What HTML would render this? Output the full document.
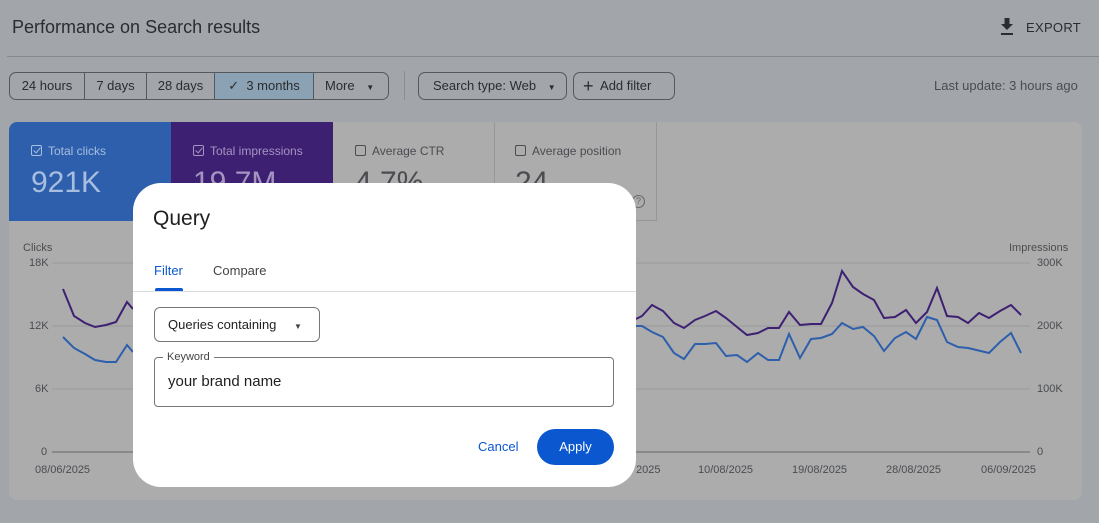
<!DOCTYPE html>
<html><head><meta charset="utf-8"><style>
*{box-sizing:border-box;margin:0;padding:0}
body{width:1099px;height:523px;overflow:hidden;background:#a2a5aa;font-family:"Liberation Sans",sans-serif;color:#2a2c30;position:relative}
.a{position:absolute}
.btn{position:absolute;top:72px;height:28px;border:1px solid #55585c;border-radius:7px;font-size:13px;line-height:26px;color:#2a2c30}
.seg{position:absolute;top:0;height:26px;text-align:center;border-left:1px solid #55585c}
.card{position:absolute;top:122px;height:99px;width:162px;font-size:12px}
.cb{display:inline-block;width:11px;height:11px;border:1px solid currentColor;border-radius:2px;vertical-align:-1px;margin-right:6px;position:relative}
.cb.on::after{content:"";position:absolute;left:3px;top:0px;width:3px;height:6px;border-right:1.5px solid currentColor;border-bottom:1.5px solid currentColor;transform:rotate(40deg)}
.big{position:absolute;left:22px;top:44px;font-size:30px}
.ax{position:absolute;font-size:11px;color:#4a4c50}
</style></head><body>
<div class="a" style="left:12px;top:17px;font-size:18px;color:#2a2c30">Performance on Search results</div>
<div class="a" style="left:1000px;top:18px;width:14px;height:17px">
<svg width="14" height="17" viewBox="0 0 14 17"><path d="M4.5 0h5v6h3.5L7 12 1 6h3.5z M1 15h12v2H1z" fill="#2a2c30"/></svg></div>
<div class="a" style="left:1026px;top:20px;font-size:13px;letter-spacing:.3px;color:#2a2c30">EXPORT</div>
<div class="a" style="left:7px;top:56px;width:1092px;height:1px;background:#868a8f"></div>

<div class="btn" style="left:9px;width:380px">
 <div class="seg" style="left:0;width:74px;border:none">24 hours</div>
 <div class="seg" style="left:74px;width:62px">7 days</div>
 <div class="seg" style="left:136px;width:68px">28 days</div>
 <div class="seg" style="left:204px;width:99px;background:#8aa2b3">✓&nbsp;&nbsp;3 months</div>
 <div class="seg" style="left:303px;width:76px;text-align:left;padding-left:11px">More <span style="font-size:8px;margin-left:8px">▼</span></div>
</div>
<div class="a" style="left:404px;top:71px;width:1px;height:29px;background:#8a8d92"></div>
<div class="btn" style="left:418px;width:149px;padding-left:14px">Search type: Web <span style="font-size:8px;margin-left:8px">▼</span></div>
<div class="btn" style="left:573px;width:102px;padding-left:9px"><span style="font-size:18px;vertical-align:-2px">+</span>&nbsp; Add filter</div>
<div class="a" style="left:934px;top:78px;font-size:13px;color:#4a4c50">Last update: 3 hours ago</div>

<div class="a" style="left:9px;top:122px;width:1073px;height:378px;background:#acacac;border-radius:8px"></div>
<div class="card" style="left:9px;background:#2d5fac;color:#a8bedf;border-radius:8px 0 0 0"><div class="a" style="left:22px;top:22px"><span class="cb on"></span>Total clicks</div><div class="big">921K</div></div>
<div class="card" style="left:171px;background:#3e2073;color:#a494c2"><div class="a" style="left:22px;top:22px"><span class="cb on"></span>Total impressions</div><div class="big">19.7M</div></div>
<div class="card" style="left:333px;color:#4a4c50;border-right:1px solid #979797"><div class="a" style="left:22px;top:22px"><span class="cb"></span>Average CTR</div><div class="big">4.7%</div></div>
<div class="card" style="left:495px;color:#4a4c50;border-right:1px solid #979797;border-bottom:1px solid #979797"><div class="a" style="left:20px;top:22px"><span class="cb"></span>Average position</div><div class="big" style="left:20px">24</div></div>
<div class="a" style="left:632px;top:195px;width:13px;height:13px;border:1px solid #666;border-radius:50%;font-size:9px;line-height:11px;text-align:center;color:#666">?</div>

<svg class="a" style="left:0;top:0" width="1099" height="523">
<g stroke="#9a9a9a" stroke-width="1"><line x1="52" y1="263" x2="1030" y2="263"/><line x1="52" y1="326" x2="1030" y2="326"/><line x1="52" y1="389" x2="1030" y2="389"/></g>
<line x1="52" y1="452" x2="1030" y2="452" stroke="#666" stroke-width="1"/>
<polyline fill="none" stroke="#3e2073" stroke-width="2" points="63,289 74,316 85,323 95,327 106,325 116,322 127,302 133,309"/>
<polyline fill="none" stroke="#2d5fac" stroke-width="2" points="63,337 74,348 85,354 95,360 106,362 116,362 127,345 133,352"/>
<polyline fill="none" stroke="#3e2073" stroke-width="2" points="636,319 642,316 652,305 663,311 674,323 684,328 695,320 705,316 716,311 726,318 737,327 747,335 758,333 768,328 779,328 789,312 800,325 811,324 821,324 832,303 842,271 853,287 863,294 874,300 884,318 895,317 906,310 916,323 927,312 937,288 947,316 958,317 968,323 979,313 989,318 1000,311 1011,305 1021,315"/>
<polyline fill="none" stroke="#2d5fac" stroke-width="2" points="636,326 642,326 652,332 663,337 674,353 684,359 695,344 705,344 716,343 726,356 737,355 747,362 758,353 768,360 779,360 789,334 800,358 811,339 821,338 832,334 842,323 853,329 863,327 874,336 884,351 895,338 906,332 916,339 927,317 937,320 947,342 958,347 968,348 989,353 1000,342 1011,333 1021,353"/>
</svg>
<div class="ax" style="left:23px;top:242px">Clicks</div>
<div class="ax" style="left:29px;top:257px">18K</div>
<div class="ax" style="left:29px;top:320px">12K</div>
<div class="ax" style="left:35px;top:383px">6K</div>
<div class="ax" style="left:41px;top:446px">0</div>
<div class="ax" style="left:35px;top:464px">08/06/2025</div>
<div class="ax" style="left:1009px;top:242px">Impressions</div>
<div class="ax" style="left:1037px;top:257px">300K</div>
<div class="ax" style="left:1037px;top:320px">200K</div>
<div class="ax" style="left:1037px;top:383px">100K</div>
<div class="ax" style="left:1037px;top:446px">0</div>
<div class="ax" style="left:698px;top:464px">10/08/2025</div>
<div class="ax" style="left:792px;top:464px">19/08/2025</div>
<div class="ax" style="left:886px;top:464px">28/08/2025</div>
<div class="ax" style="left:981px;top:464px">06/09/2025</div>
<div class="ax" style="left:636px;top:464px">2025</div>

<div class="a" style="left:133px;top:183px;width:503px;height:304px;background:#fff;border-radius:28px">
 <div class="a" style="left:20px;top:24px;font-size:21px;color:#1f1f1f">Query</div>
 <div class="a" style="left:21px;top:80px;font-size:13px;color:#0b57d0">Filter</div>
 <div class="a" style="left:22px;top:105px;width:28px;height:3px;background:#0b57d0;border-radius:2px 2px 0 0"></div>
 <div class="a" style="left:80px;top:80px;font-size:13px;color:#444">Compare</div>
 <div class="a" style="left:0;top:108px;width:503px;height:1px;background:#dadce0"></div>
 <div class="a" style="left:21px;top:124px;width:166px;height:35px;border:1px solid #747775;border-radius:6px;font-size:13px;line-height:33px;padding-left:13px;color:#1f1f1f">Queries containing <span style="font-size:8px;margin-left:14px;color:#444">▼</span></div>
 <div class="a" style="left:21px;top:174px;width:460px;height:50px;border:1px solid #747775;border-radius:4px"></div>
 <div class="a" style="left:30px;top:168px;background:#fff;padding:0 4px;font-size:11px;color:#444">Keyword</div>
 <div class="a" style="left:35px;top:190px;font-size:15px;color:#1f1f1f">your brand name</div>
 <div class="a" style="left:345px;top:256px;font-size:13px;color:#0b57d0">Cancel</div>
 <div class="a" style="left:404px;top:246px;width:77px;height:36px;background:#0b57d0;border-radius:18px;color:#fff;font-size:13px;text-align:center;line-height:36px">Apply</div>
</div>
</body></html>
